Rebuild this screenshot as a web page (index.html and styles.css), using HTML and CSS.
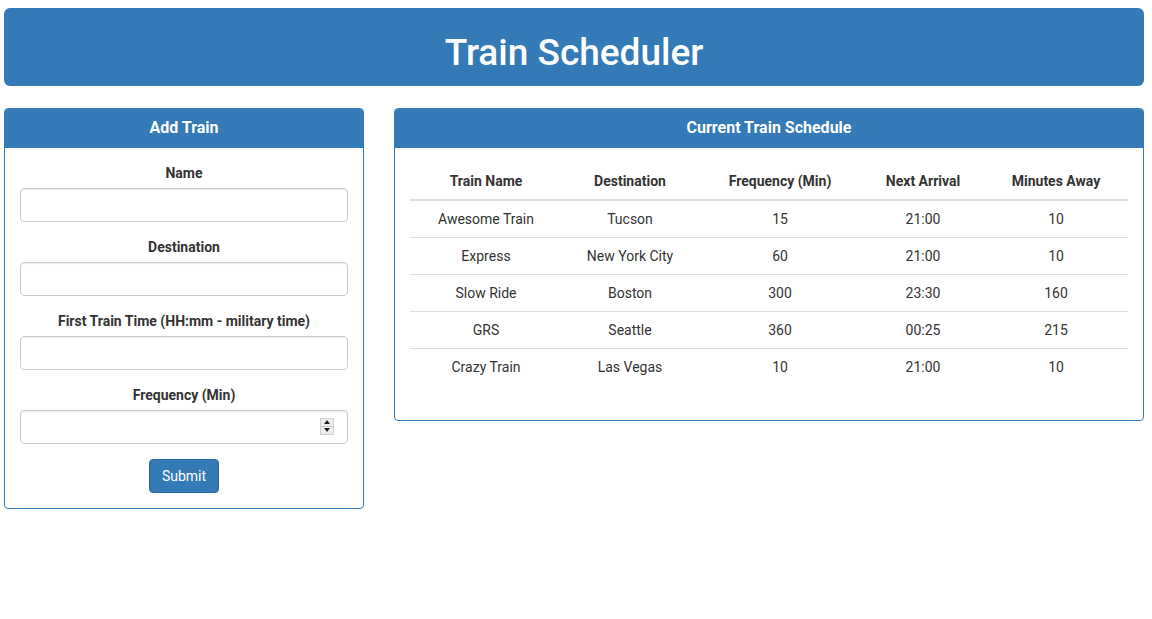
FILE: index.html
```html
<!DOCTYPE html>
<html>
<head>
<meta charset="utf-8">
<title>Train Scheduler</title>
<link rel="stylesheet" href="styles.css">
</head>
<body>
<div class="page">
  <header class="jumbotron">
    <h1 class="title">Train Scheduler</h1>
  </header>
  <div class="row">
    <section class="panel">
      <div class="panel-heading"><h3 class="panel-title">Add Train</h3></div>
      <div class="panel-body">
        <form class="form">
          <div class="form-group">
            <label class="label">Name</label>
            <input class="input" type="text">
          </div>
          <div class="form-group">
            <label class="label">Destination</label>
            <input class="input" type="text">
          </div>
          <div class="form-group">
            <label class="label">First Train Time (HH:mm - military time)</label>
            <input class="input" type="text">
          </div>
          <div class="form-group">
            <label class="label">Frequency (Min)</label>
            <div class="number-wrap">
              <input class="input" type="text">
              <span class="spinner"><span class="spin-up"></span><span class="spin-down"></span></span>
            </div>
          </div>
          <div class="actions">
            <button class="btn" type="button">Submit</button>
          </div>
        </form>
      </div>
    </section>
    <section class="panel">
      <div class="panel-heading"><h3 class="panel-title">Current Train Schedule</h3></div>
      <div class="panel-body">
        <table class="table">
          <colgroup>
            <col class="c1"><col class="c2"><col class="c3"><col class="c4"><col class="c5">
          </colgroup>
          <thead>
            <tr><th>Train Name</th><th>Destination</th><th>Frequency (Min)</th><th>Next Arrival</th><th>Minutes Away</th></tr>
          </thead>
          <tbody>
            <tr><td>Awesome Train</td><td>Tucson</td><td>15</td><td>21:00</td><td>10</td></tr>
            <tr><td>Express</td><td>New York City</td><td>60</td><td>21:00</td><td>10</td></tr>
            <tr><td>Slow Ride</td><td>Boston</td><td>300</td><td>23:30</td><td>160</td></tr>
            <tr><td>GRS</td><td>Seattle</td><td>360</td><td>00:25</td><td>215</td></tr>
            <tr><td>Crazy Train</td><td>Las Vegas</td><td>10</td><td>21:00</td><td>10</td></tr>
          </tbody>
        </table>
      </div>
    </section>
  </div>
</div>
</body>
</html>
```
FILE: styles.css
```css
* { box-sizing: border-box; }
html, body { margin: 0; padding: 0; background: #fff; }
body {
  font-family: Roboto, "Liberation Sans", Arial, sans-serif;
  font-size: 14px;
  line-height: 20px;
  color: #333;
}
.page {
  width: 1140px;
  margin: 0 0 0 4px;
  padding-top: 8px;
}
.jumbotron {
  background: #337ab7;
  border-radius: 6px;
  height: 78px;
  padding-top: 12px;
  display: flex;
  align-items: center;
  justify-content: center;
  margin-bottom: 22px;
}
.title {
  margin: 0;
  color: #fff;
  font-size: 37px;
  font-weight: 500;
  line-height: 40px;
}
.row {
  display: grid;
  grid-template-columns: 360px 750px;
  column-gap: 30px;
  align-items: start;
}
.panel {
  border: 1px solid #337ab7;
  border-radius: 4px;
  background: #fff;
  overflow: hidden;
}
.panel-heading {
  background: #337ab7;
  color: #fff;
  padding: 10px 15px;
  border-bottom: 1px solid #337ab7;
  text-align: center;
}
.panel-title {
  margin: 0;
  font-size: 16px;
  font-weight: 700;
  line-height: 17.6px;
}
.panel-body { padding: 15px; }
.form-group {
  margin-bottom: 15px;
  text-align: center;
}
.label {
  display: block;
  font-weight: 700;
  margin-bottom: 5px;
  line-height: 20px;
}
.input {
  display: block;
  width: 100%;
  height: 34px;
  padding: 6px 12px;
  font: inherit;
  color: #555;
  background: #fff;
  border: 1px solid #ccc;
  border-radius: 4px;
  box-shadow: inset 0 1px 1px rgba(0,0,0,.075);
}
.number-wrap { position: relative; }
.spinner {
  position: absolute;
  right: 14px;
  top: 8px;
  width: 14px;
  height: 17px;
  display: flex;
  flex-direction: column;
  border: 1px solid #d0d0d0;
  background: #ececec;
}
.spin-up, .spin-down {
  flex: 1;
  position: relative;
}
.spin-up { border-bottom: 1px solid #c8c8c8; }
.spin-up::after, .spin-down::after {
  content: "";
  position: absolute;
  left: 50%;
  top: 50%;
  margin-left: -3px;
  border-left: 3px solid transparent;
  border-right: 3px solid transparent;
}
.spin-up::after { border-bottom: 4px solid #222; margin-top: -2px; }
.spin-down::after { border-top: 4px solid #222; margin-top: -2px; }
.actions { text-align: center; }
.btn {
  display: inline-block;
  height: 34px;
  padding: 6px 12px;
  font: inherit;
  color: #fff;
  background: #337ab7;
  border: 1px solid #2e6da4;
  border-radius: 4px;
  line-height: 20px;
}
.table {
  width: 100%;
  border-collapse: collapse;
  border-spacing: 0;
  margin-bottom: 20px;
  table-layout: fixed;
}
.c1 { width: 152px; }
.c2 { width: 136px; }
.c3 { width: 164px; }
.c4 { width: 122px; }
.c5 { width: 144px; }
.table th, .table td {
  padding: 8px;
  line-height: 20px;
  text-align: center;
  vertical-align: top;
}
.table th {
  font-weight: 700;
  border-bottom: 2px solid #ddd;
}
.table td { border-top: 1px solid #ddd; }
.table tbody tr:first-child td { border-top: 0; }
```
